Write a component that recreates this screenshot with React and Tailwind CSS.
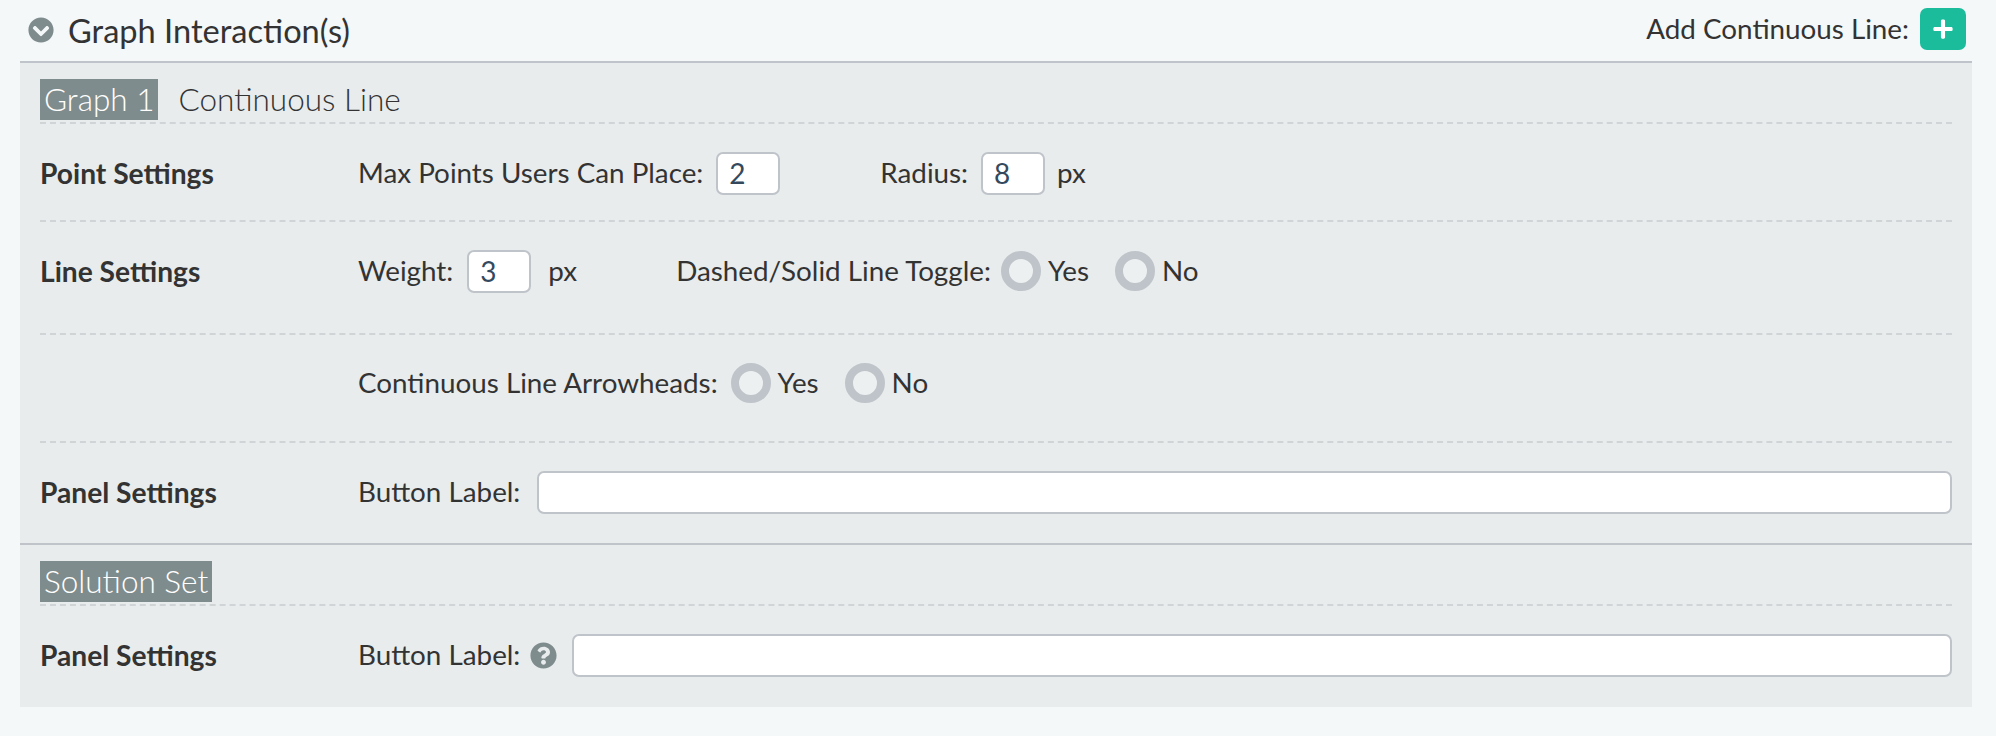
import { FaChevronCircleDown, FaPlus, FaQuestionCircle } from "react-icons/fa";

function Row({ label, className, children }) {
  return (
    <div className={`flex items-start ${className}`}>
      <div className="w-[318px] h-[42px] flex items-center font-bold text-[28.2px]">{label}</div>
      <div className="flex-1 flex items-center h-[42px]">{children}</div>
    </div>
  );
}

function SmallInput({ value, className = "" }) {
  return (
    <input
      readOnly
      value={value}
      className={`w-[64px] h-[43px] shrink-0 bg-white border-2 border-[#bfc4ca] rounded-[7px] px-[11px] text-[28px] text-[#34495e] outline-none ${className}`}
    />
  );
}

function Radio({ label, className = "" }) {
  return (
    <label className={`flex items-center ${className}`}>
      <span className="block w-[40px] h-[40px] rounded-full border-[8px] border-[#bfc4ca] bg-[#edf0f1]"></span>
      <span className="ml-[7px]">{label}</span>
    </label>
  );
}

function TextInput() {
  return <input readOnly value="" className="flex-1 h-[43px] bg-white border-2 border-[#bfc4ca] rounded-[7px] outline-none" />;
}

export default function App() {
  return (
    <main className="min-h-[736px] bg-[#f4f8f9] text-[#333] text-[27.8px] px-[20px] pr-[24px] font-['Lato',sans-serif]">
      {/* Header */}
      <div className="flex justify-between items-start h-[61px]">
        <div className="flex items-center h-[61px] pl-[8px]">
          <FaChevronCircleDown className="text-[#7f8c8d] w-[26px] h-[26px] -mt-[1px]" />
          <h2 className="ml-[14px] text-[32.6px] pt-[2px]">Graph Interaction(s)</h2>
        </div>
        <div className="flex items-center pt-[8px] pr-[6px]">
          <span>Add Continuous Line:</span>
          <button className="ml-[11px] w-[46px] h-[42px] bg-[#1abc9c] rounded-[7px] flex items-center justify-center">
            <FaPlus className="text-white w-[22px] h-[22px]" />
          </button>
        </div>
      </div>

      <div className="bg-[#e8eced] border-t-2 border-[#bfc4ca] px-[20px]">
        {/* Graph 1 */}
        <div className="pt-[16px] pb-[2px] border-b-2 border-dashed border-[#d0d4d6] flex items-center">
          <span className="bg-[#7f8c8d] text-white font-light text-[31.5px] leading-[41px] px-[4px]">Graph 1</span>
          <span className="ml-[20px] font-light text-[31.5px] leading-[41px]">Continuous Line</span>
        </div>

        <Row label="Point Settings" className="pt-[28px] pb-[26px] border-b-2 border-dashed border-[#d0d4d6]">
          <span>Max Points Users Can Place:</span>
          <SmallInput value="2" className="ml-[13px]" />
          <span className="ml-[100px]">Radius:</span>
          <SmallInput value="8" className="ml-[13px]" />
          <span className="ml-[12px]">px</span>
        </Row>

        <Row label="Line Settings" className="pt-[28px] pb-[41px] border-b-2 border-dashed border-[#d0d4d6]">
          <span>Weight:</span>
          <SmallInput value="3" className="ml-[14px]" />
          <span className="ml-[17px]">px</span>
          <span className="ml-[99px]">Dashed/Solid Line Toggle:</span>
          <Radio label="Yes" className="ml-[10px]" />
          <Radio label="No" className="ml-[26px]" />
        </Row>

        <Row label="" className="pt-[27px] pb-[37px] border-b-2 border-dashed border-[#d0d4d6]">
          <span>Continuous Line Arrowheads:</span>
          <Radio label="Yes" className="ml-[13px]" />
          <Radio label="No" className="ml-[26px]" />
        </Row>

        <Row label="Panel Settings" className="pt-[28px] pb-[30px]">
          <span>Button Label:</span>
          <span className="w-[17px]"></span>
          <TextInput />
        </Row>
      </div>

      {/* Solution Set */}
      <div className="bg-[#e8eced] border-t-2 border-[#bfc4ca] px-[20px]">
        <div className="pt-[16px] pb-[2px] border-b-2 border-dashed border-[#d0d4d6] flex items-center">
          <span className="bg-[#7f8c8d] text-white font-light text-[31.5px] leading-[41px] px-[4px]">Solution Set</span>
        </div>
        <Row label="Panel Settings" className="pt-[28px] pb-[31px]">
          <span>Button Label:</span>
          <FaQuestionCircle className="ml-[10px] w-[27px] h-[27px] text-[#7f8c8d]" />
          <span className="w-[15px]"></span>
          <TextInput />
        </Row>
      </div>
    </main>
  );
}
